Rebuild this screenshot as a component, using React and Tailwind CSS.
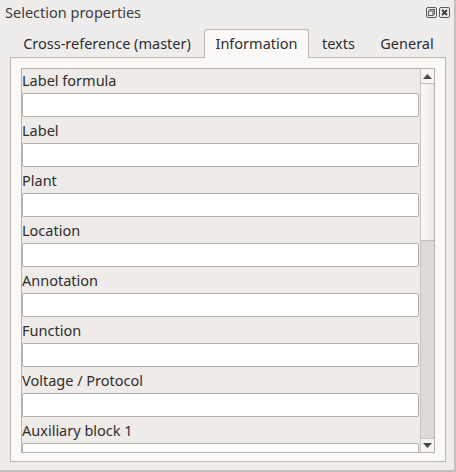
import React from "react";

const font = { fontFamily: '"Noto Sans", "Open Sans", sans-serif' };

const fields = [
  "Label formula",
  "Label",
  "Plant",
  "Location",
  "Annotation",
  "Function",
  "Voltage / Protocol",
  "Auxiliary block 1",
];

function FloatIcon() {
  return (
    <svg width="11" height="11" viewBox="0 0 11 11">
      <rect x="0.5" y="0.5" width="10" height="10" rx="1.5" fill="none" stroke="#5a5a5a" />
      <rect x="4" y="2.5" width="4.5" height="4.5" fill="none" stroke="#5a5a5a" />
      <rect x="2.5" y="4" width="4.5" height="4.5" fill="#efeeec" stroke="#5a5a5a" />
    </svg>
  );
}

function CloseIcon() {
  return (
    <svg width="11" height="11" viewBox="0 0 11 11">
      <rect x="0.5" y="0.5" width="10" height="10" rx="1.5" fill="none" stroke="#5a5a5a" />
      <path d="M3 3 L8 8 M8 3 L3 8" stroke="#3a3a3a" strokeWidth="1.8" />
    </svg>
  );
}

export default function App() {
  return (
    <div
      className="w-[456px] h-[472px] bg-[#efedeb] border-r-2 border-b-2 border-[#c4c1bc] flex flex-col overflow-hidden text-[#3c3c3c]"
      style={font}
    >
      {/* title */}
      <div className="h-[24px] flex items-center pl-[5px] pr-[4px]">
        <span className="text-[14.5px] leading-none text-[#3c3c3c]">Selection properties</span>
        <div className="ml-auto flex gap-[2px]">
          <FloatIcon />
          <CloseIcon />
        </div>
      </div>

      {/* tabs */}
      <div className="pl-[10px] pt-[5px] flex flex-col">
        <div className="flex h-[28px] items-stretch text-[14.5px] text-[#2e2e2e]">
          <div className="w-[194px] flex items-center justify-center pt-[2px]">Cross-reference (master)</div>
          <div className="w-[105px] -mb-[1px] relative z-10 flex items-center justify-center bg-[#fbf9f7] border border-b-0 border-[#bcb9b4] rounded-t-[3px]">
            Information
          </div>
          <div className="w-[59px] flex items-center justify-center pt-[2px]">texts</div>
          <div className="w-[78px] flex items-center justify-center pt-[2px]">General</div>
        </div>

        {/* pane */}
        <div className="w-[436px] h-[405px] border border-[#bcb9b4] bg-[#fbf9f7] p-[10px] pb-[8px]">
          <div className="h-[385px] border border-[#b7b4af] flex bg-[#eeebe8]">
            <div className="flex-1 overflow-hidden flex flex-col">
              {fields.map((f) => (
                <div key={f} className="flex flex-col mb-[2px] shrink-0">
                  <div className="h-[24px] flex items-center text-[14.5px] text-[#2e2e2e]">{f}</div>
                  <div className="h-[24px] bg-white border border-[#b3b0ab] rounded-[2px] mr-[1px]" />
                </div>
              ))}
            </div>
            {/* scrollbar */}
            <div className="w-[14px] flex flex-col border-l border-[#c9c6c1] bg-[#dedbd7]">
              <div className="h-[14px] bg-[#f6f5f3] flex items-center justify-center">
                <svg width="9" height="5" viewBox="0 0 9 5">
                  <path d="M0 5 L4.5 0 L9 5 Z" fill="#4a4a4a" />
                </svg>
              </div>
              <div className="h-[158px] bg-gradient-to-r from-[#fbfaf9] to-[#e9e7e4] border-y border-[#c4c1bc]" />
              <div className="flex-1" />
              <div className="h-[14px] bg-[#f6f5f3] border-t border-[#c9c6c1] flex items-center justify-center">
                <svg width="9" height="5" viewBox="0 0 9 5">
                  <path d="M0 0 L9 0 L4.5 5 Z" fill="#4a4a4a" />
                </svg>
              </div>
            </div>
          </div>
        </div>
      </div>
    </div>
  );
}
